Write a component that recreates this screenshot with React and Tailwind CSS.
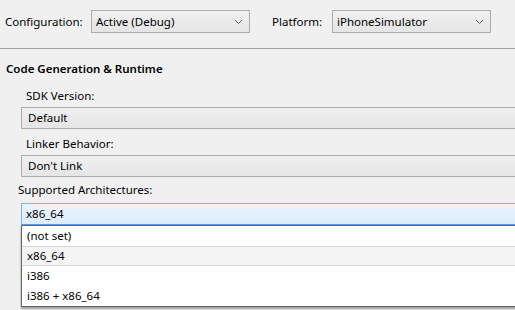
import React from "react";

function Chevron() {
  return (
    <svg width="9" height="6" viewBox="0 0 9 6" className="shrink-0">
      <path d="M1 1 L4.5 4.5 L8 1" fill="none" stroke="#5f5f5f" strokeWidth="1" />
    </svg>
  );
}

function ComboBox({ value, className = "" }) {
  return (
    <div
      className={`flex items-center h-[23px] border border-[#acacac] bg-gradient-to-b from-[#f0f0f0] to-[#e5e5e5] pl-[4px] pr-[6px] ${className}`}
    >
      <span className="flex-1 leading-[16px]">{value}</span>
      <Chevron />
    </div>
  );
}

function FieldBox({ value }) {
  return (
    <div className="ml-[21px] mr-[-10px] h-[22px] flex items-center border border-[#acacac] bg-gradient-to-b from-[#f0f0f0] to-[#e5e5e5] pl-[6px]">
      <span className="leading-[16px]">{value}</span>
    </div>
  );
}

export default function App() {
  const options = ["(not set)", "x86_64", "i386", "i386 + x86_64"];
  const selected = "x86_64";

  return (
    <div
      className="w-[515px] h-[310px] overflow-hidden bg-[#f0f0f0] text-[11.5px] text-black"
      style={{ fontFamily: '"Segoe UI", "Noto Sans", sans-serif' }}
    >
      {/* Configuration / Platform */}
      <div className="flex items-center pt-[10px]">
        <span className="w-[91px] pl-[5px] leading-[16px]">Configuration:</span>
        <ComboBox value="Active (Debug)" className="w-[159px]" />
        <span className="w-[82px] pl-[22px] leading-[16px]">Platform:</span>
        <ComboBox value="iPhoneSimulator" className="w-[159px]" />
      </div>

      <div className="mt-[15px] h-px bg-[#a0a0a0]" />

      <div className="mt-[12px] pl-[6px] font-semibold leading-[16px]">Code Generation &amp; Runtime</div>

      <div className="mt-[11px] pl-[26px] leading-[16px]">SDK Version:</div>
      <div className="mt-[3px]">
        <FieldBox value="Default" />
      </div>

      <div className="mt-[7px] pl-[26px] leading-[16px]">Linker Behavior:</div>
      <div className="mt-[3px]">
        <FieldBox value="Don't Link" />
      </div>

      <div className="mt-[5px] pl-[18px] leading-[16px]">Supported Architectures:</div>
      <div className="relative mt-[5px] ml-[21px] mr-[-10px]">
        <div className="h-[22px] flex items-center border border-[#7eb4ea] border-b-[#569de5] bg-gradient-to-b from-[#ecf4fc] to-[#dcecfc] pl-[4px]">
          <span className="leading-[16px]">{selected}</span>
        </div>
        <div className="absolute left-0 right-0 top-full bg-white border border-[#646464] shadow-[0_2px_2px_rgba(0,0,0,0.35)]">
          {options.map((opt) => (
            <div
              key={opt}
              className={`flex items-center h-[20px] pl-[5px] leading-[16px] ${
                opt === selected ? "bg-[#f4f4f4] border-y border-[#d8d8d8]" : ""
              }`}
            >
              {opt}
            </div>
          ))}
        </div>
      </div>
    </div>
  );
}
